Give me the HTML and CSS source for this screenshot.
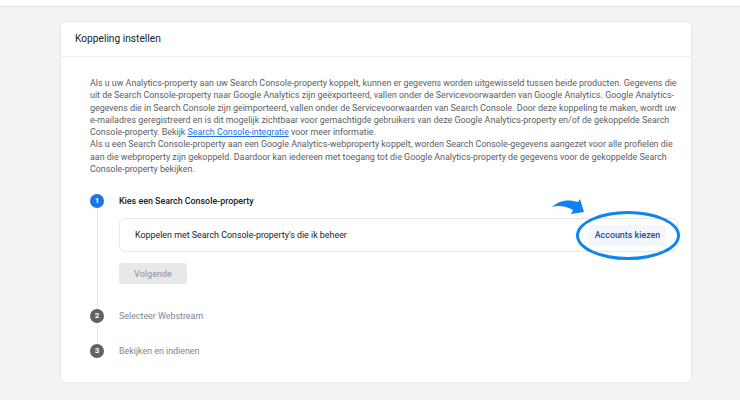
FILE: index.html
```html
<!DOCTYPE html>
<html lang="nl">
<head>
    <meta charset="UTF-8">
    <meta name="viewport" content="width=device-width, initial-scale=1.0">
    <title>Koppeling instellen</title>
    <link rel="stylesheet" href="styles.css">
</head>
<body>
    <div class="topbar"></div>

    <div class="card">
        <div class="card-header">Koppeling instellen</div>
        <div class="card-body">
            <p class="intro">
                Als u uw Analytics-property aan uw Search Console-property koppelt, kunnen er gegevens worden uitgewisseld tussen beide producten. Gegevens die uit de Search Console-property naar Google Analytics zijn geëxporteerd, vallen onder de Servicevoorwaarden van Google Analytics. Google Analytics-gegevens die in Search Console zijn geïmporteerd, vallen onder de Servicevoorwaarden van Search Console. Door deze koppeling te maken, wordt uw e-mailadres geregistreerd en is dit mogelijk zichtbaar voor gemachtigde gebruikers van deze Google Analytics-property en/of de gekoppelde Search Console-property. Bekijk <a href="#">Search Console-integratie</a> voor meer informatie.<br>
                Als u een Search Console-property aan een Google Analytics-webproperty koppelt, worden Search Console-gegevens aangezet voor alle profielen die aan die webproperty zijn gekoppeld. Daardoor kan iedereen met toegang tot die Google Analytics-property de gegevens voor de gekoppelde Search Console-property bekijken.
            </p>

            <div class="steps">
                <div class="step active">
                    <div class="step-rail">
                        <span class="step-num">1</span>
                        <span class="step-line"></span>
                    </div>
                    <div class="step-content">
                        <div class="step-title">Kies een Search Console-property</div>
                        <div class="choice">
                            <span>Koppelen met Search Console-property's die ik beheer</span>
                            <button type="button" class="choose-btn">
                                Accounts kiezen
                                <span class="highlight-ring"></span>
                                <svg class="highlight-arrow" width="38" height="22" viewBox="0 0 38 22">
                                    <path d="M3 12 C10 5 20 4 29 7 L31 4 L35 17 L22 19 L24 15 C17 11 9 10 3 12 Z" fill="#0f83f0"/>
                                </svg>
                            </button>
                        </div>
                        <button type="button" class="next-btn" disabled>Volgende</button>
                    </div>
                </div>

                <div class="step">
                    <div class="step-rail">
                        <span class="step-num">2</span>
                        <span class="step-line"></span>
                    </div>
                    <div class="step-content">
                        <div class="step-title">Selecteer Webstream</div>
                    </div>
                </div>

                <div class="step last">
                    <div class="step-rail">
                        <span class="step-num">3</span>
                    </div>
                    <div class="step-content">
                        <div class="step-title">Bekijken en indienen</div>
                    </div>
                </div>
            </div>
        </div>
    </div>
</body>
</html>
```

FILE: styles.css
```css
body {
    font-family: Roboto, Arial, sans-serif;
    background-color: #f1f3f4;
    margin: 0;
    padding: 0;
    color: #202124;
}

.topbar {
    height: 6px;
    background-color: #fff;
    border-bottom: 1px solid #e3e5e8;
}

.card {
    width: 632px;
    margin: 14px 0 0 60px;
    background-color: #fff;
    border: 1px solid #e6e8eb;
    border-radius: 6px;
    box-sizing: border-box;
}

.card-header {
    height: 34px;
    line-height: 34px;
    padding: 0 14px;
    font-size: 10.2px;
    border-bottom: 1px solid #eceef0;
}

.card-body {
    padding: 20px 13px 0 29px;
}

.intro {
    margin: 0;
    font-size: 8.9px;
    line-height: 12.3px;
    color: #5a5e63;
}

.intro a {
    color: #1a73e8;
}

.steps {
    margin-top: 19px;
}

.step {
    display: flex;
    gap: 15px;
}

.step-rail {
    display: flex;
    flex-direction: column;
    align-items: center;
    width: 14px;
    flex-shrink: 0;
}

.step-num {
    width: 14px;
    height: 14px;
    border-radius: 50%;
    background-color: #5f6368;
    color: #fff;
    font-size: 8px;
    font-weight: 700;
    line-height: 14px;
    text-align: center;
}

.step.active .step-num {
    background-color: #1a73e8;
}

.step-line {
    flex: 1;
    width: 1px;
    background-color: #e4e6e8;
}

.step-content {
    flex: 1;
    padding-bottom: 21px;
}

.step.active .step-content {
    padding-bottom: 25px;
}

.step.last .step-content {
    padding-bottom: 24px;
}

.step-title {
    height: 14px;
    line-height: 14px;
    font-size: 8.9px;
    color: #80868b;
}

.step.active .step-title {
    color: #202124;
    font-weight: 500;
}

.choice {
    display: flex;
    align-items: center;
    justify-content: space-between;
    height: 34px;
    margin-top: 10px;
    padding: 0 11px 0 15px;
    border: 1px solid #e6e8eb;
    border-radius: 6px;
    font-size: 8.9px;
    box-sizing: border-box;
}

.choose-btn {
    position: relative;
    height: 21px;
    width: 77px;
    padding: 0;
    border: none;
    border-radius: 3px;
    background-color: #f3f7fd;
    color: #1a4ea6;
    font-family: inherit;
    font-size: 8.9px;
    font-weight: 500;
    cursor: pointer;
}

.highlight-ring {
    position: absolute;
    left: -13px;
    top: -14px;
    width: 104px;
    height: 49px;
    border: 3px solid #0f83f0;
    border-radius: 50%;
    box-sizing: border-box;
}

.highlight-arrow {
    position: absolute;
    left: -40px;
    top: -30px;
}

.next-btn {
    display: block;
    width: 68px;
    height: 21px;
    margin-top: 11px;
    border: none;
    border-radius: 3px;
    background-color: #e8e8e8;
    color: #a0a3a8;
    font-family: inherit;
    font-size: 9px;
    font-weight: 500;
}
```
